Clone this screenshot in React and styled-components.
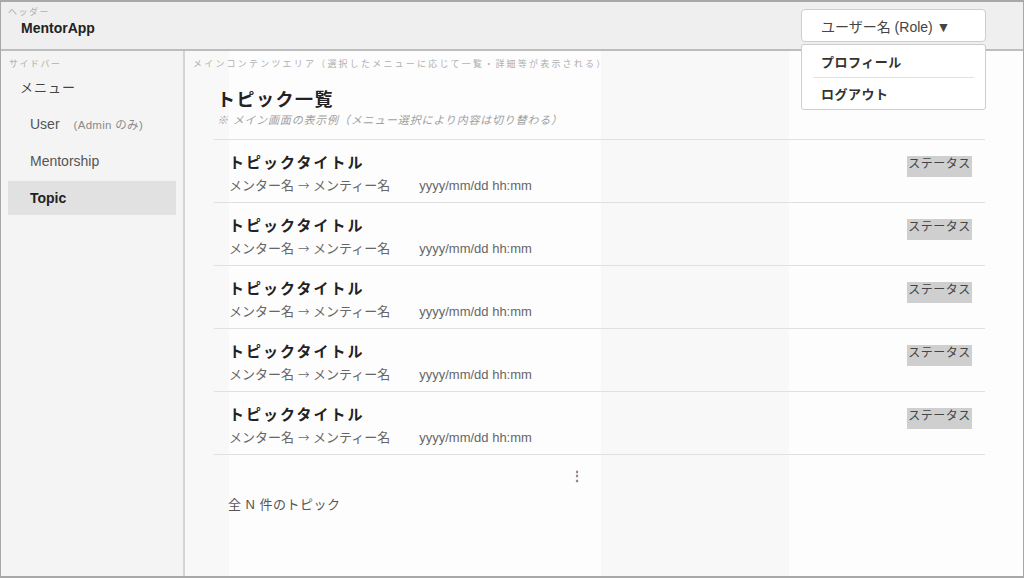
import React from 'react';
import styled, { createGlobalStyle } from 'styled-components';

const GlobalStyle = createGlobalStyle`
  html, body {
    margin: 0;
    padding: 0;
    height: 100%;
  }
  body {
    font-family: "Liberation Sans", "Noto Sans CJK JP", sans-serif;
    color: #333;
    background: #fff;
  }
  * {
    box-sizing: border-box;
  }
`;

const Frame = styled.div`
  position: relative;
  width: 1024px;
  height: 578px;
  border: 1px solid #a8a8a8;
  border-top-width: 2px;
  border-bottom-width: 2px;
  display: flex;
  flex-direction: column;
  overflow: hidden;
`;

const Header = styled.header`
  height: 49px;
  flex: none;
  background: #efefef;
  border-bottom: 2px solid #bdbdbd;
  padding: 5px 0 0 7px;
`;

const ZoneLabel = styled.div`
  font-size: 9px;
  line-height: 11px;
  color: #b0b0b0;
  letter-spacing: ${p => p.spacing || 1.5}px;
  margin-left: ${p => p.indent || 0}px;
`;

const Logo = styled.div`
  font-size: 14px;
  font-weight: bold;
  color: #222;
  margin: 2px 0 0 13px;
`;

const Body = styled.div`
  flex: 1;
  display: grid;
  grid-template-columns: 184px 1fr;
  min-height: 0;
`;

const Sidebar = styled.aside`
  background: #f4f4f4;
  border-right: 2px solid #d4d4d4;
  padding: 8px 7px 0 7px;
`;

const MenuTitle = styled.div`
  font-size: 13px;
  line-height: 17px;
  color: #444;
  margin: 9px 0 11px 12px;
  letter-spacing: 1px;
`;

const MenuItem = styled.div`
  height: 34px;
  display: flex;
  align-items: center;
  padding-left: 22px;
  margin-bottom: 3px;
  font-size: 14px;
  color: ${p => (p.active ? '#222' : '#555')};
  font-weight: ${p => (p.active ? 'bold' : 'normal')};
  background: ${p => (p.active ? '#e1e1e1' : 'transparent')};
  width: 168px;
`;

const Note = styled.span`
  font-size: 11.5px;
  color: #8a8a8a;
  margin-left: 14px;
  letter-spacing: 0.3px;
`;

const Main = styled.main`
  background: linear-gradient(
    to right,
    #f8f8f8 0,
    #f8f8f8 44px,
    #fdfdfd 44px,
    #fdfdfd 416px,
    #f8f8f8 416px,
    #f8f8f8 604px,
    #fdfdfd 604px
  );
  padding: 8px 38px 0 8px;
`;

const Content = styled.div`
  margin-left: 21px;
`;

const PageTitle = styled.h1`
  margin: 18px 0 0 3px;
  font-size: 18px;
  line-height: 24px;
  font-weight: bold;
  color: #222;
  letter-spacing: 1.5px;
`;

const SubNote = styled.div`
  margin: 1px 0 0 3px;
  font-size: 11px;
  line-height: 14px;
  font-style: italic;
  color: #a0a0a0;
  letter-spacing: 0.8px;
`;

const List = styled.div`
  margin-top: 12px;
  border-top: 1px solid #e0e0e0;
`;

const Row = styled.div`
  height: 63px;
  border-bottom: 1px solid #e0e0e0;
  display: flex;
  justify-content: space-between;
  align-items: flex-start;
  padding: 13px 13px 0 15px;
`;

const RowTitle = styled.div`
  font-size: 15px;
  line-height: 20px;
  font-weight: bold;
  color: #222;
  letter-spacing: 2px;
`;

const Meta = styled.div`
  display: flex;
  align-items: baseline;
  font-size: 13px;
  line-height: 16px;
  color: #666;
  margin-top: 4px;
`;

const Arrow = styled.span`
  font-family: "DejaVu Sans", sans-serif;
  font-size: 14px;
  font-weight: 300;
`;

const Date = styled.span`
  margin-left: 29px;
`;

const Status = styled.span`
  margin-top: 3px;
  width: 65px;
  height: 21px;
  background: #cfcfcf;
  font-size: 12px;
  line-height: 16px;
  color: #444;
  text-align: center;
  letter-spacing: 0.5px;
`;

const More = styled.div`
  text-align: center;
  width: 725px;
  margin-top: 13px;
  color: #777;
  font-size: 12px;
  line-height: 16px;
  font-weight: bold;
`;

const Total = styled.div`
  margin: 10px 0 0 14px;
  font-size: 13px;
  color: #555;
  letter-spacing: 0.5px;
`;

const UserMenu = styled.div`
  position: absolute;
  top: 7px;
  left: 800px;
  width: 185px;
`;

const UserButton = styled.div`
  height: 33px;
  background: #fff;
  border: 1px solid #cdcdcd;
  border-radius: 4px;
  padding-left: 19px;
  display: flex;
  align-items: center;
  font-size: 14px;
  color: #444;
`;

const Dropdown = styled.div`
  margin-top: 2px;
  background: #fff;
  border: 1px solid #cdcdcd;
  border-radius: 3px;
  padding: 0 11px;
`;

const DropItem = styled.div`
  height: 32px;
  display: flex;
  align-items: center;
  padding-left: 8px;
  font-size: 13px;
  font-weight: bold;
  color: #333;
  letter-spacing: 0.5px;
  border-top: ${p => (p.divided ? '1px solid #e2e2e2' : 'none')};
`;

const topics = [1, 2, 3, 4, 5];

export default function App() {
  return (
    <>
      <GlobalStyle />
      <Frame>
        <Header>
          <ZoneLabel>ヘッダー</ZoneLabel>
          <Logo>MentorApp</Logo>
        </Header>
        <Body>
          <Sidebar>
            <ZoneLabel indent={1}>サイドバー</ZoneLabel>
            <MenuTitle>メニュー</MenuTitle>
            <MenuItem>
              User<Note>(Admin のみ)</Note>
            </MenuItem>
            <MenuItem>Mentorship</MenuItem>
            <MenuItem active>Topic</MenuItem>
          </Sidebar>
          <Main>
            <ZoneLabel spacing={2.2}>メインコンテンツエリア（選択したメニューに応じて一覧・詳細等が表示される）</ZoneLabel>
            <Content>
              <PageTitle>トピック一覧</PageTitle>
              <SubNote>※ メイン画面の表示例（メニュー選択により内容は切り替わる）</SubNote>
              <List>
                {topics.map(n => (
                  <Row key={n}>
                    <div>
                      <RowTitle>トピックタイトル</RowTitle>
                      <Meta>
                        <span>メンター名 <Arrow>→</Arrow> メンティー名</span>
                        <Date>yyyy/mm/dd hh:mm</Date>
                      </Meta>
                    </div>
                    <Status>ステータス</Status>
                  </Row>
                ))}
              </List>
              <More>⋮</More>
              <Total>全 N 件のトピック</Total>
            </Content>
          </Main>
        </Body>
        <UserMenu>
          <UserButton>ユーザー名 (Role) ▼</UserButton>
          <Dropdown>
            <DropItem>プロフィール</DropItem>
            <DropItem divided>ログアウト</DropItem>
          </Dropdown>
        </UserMenu>
      </Frame>
    </>
  );
}
